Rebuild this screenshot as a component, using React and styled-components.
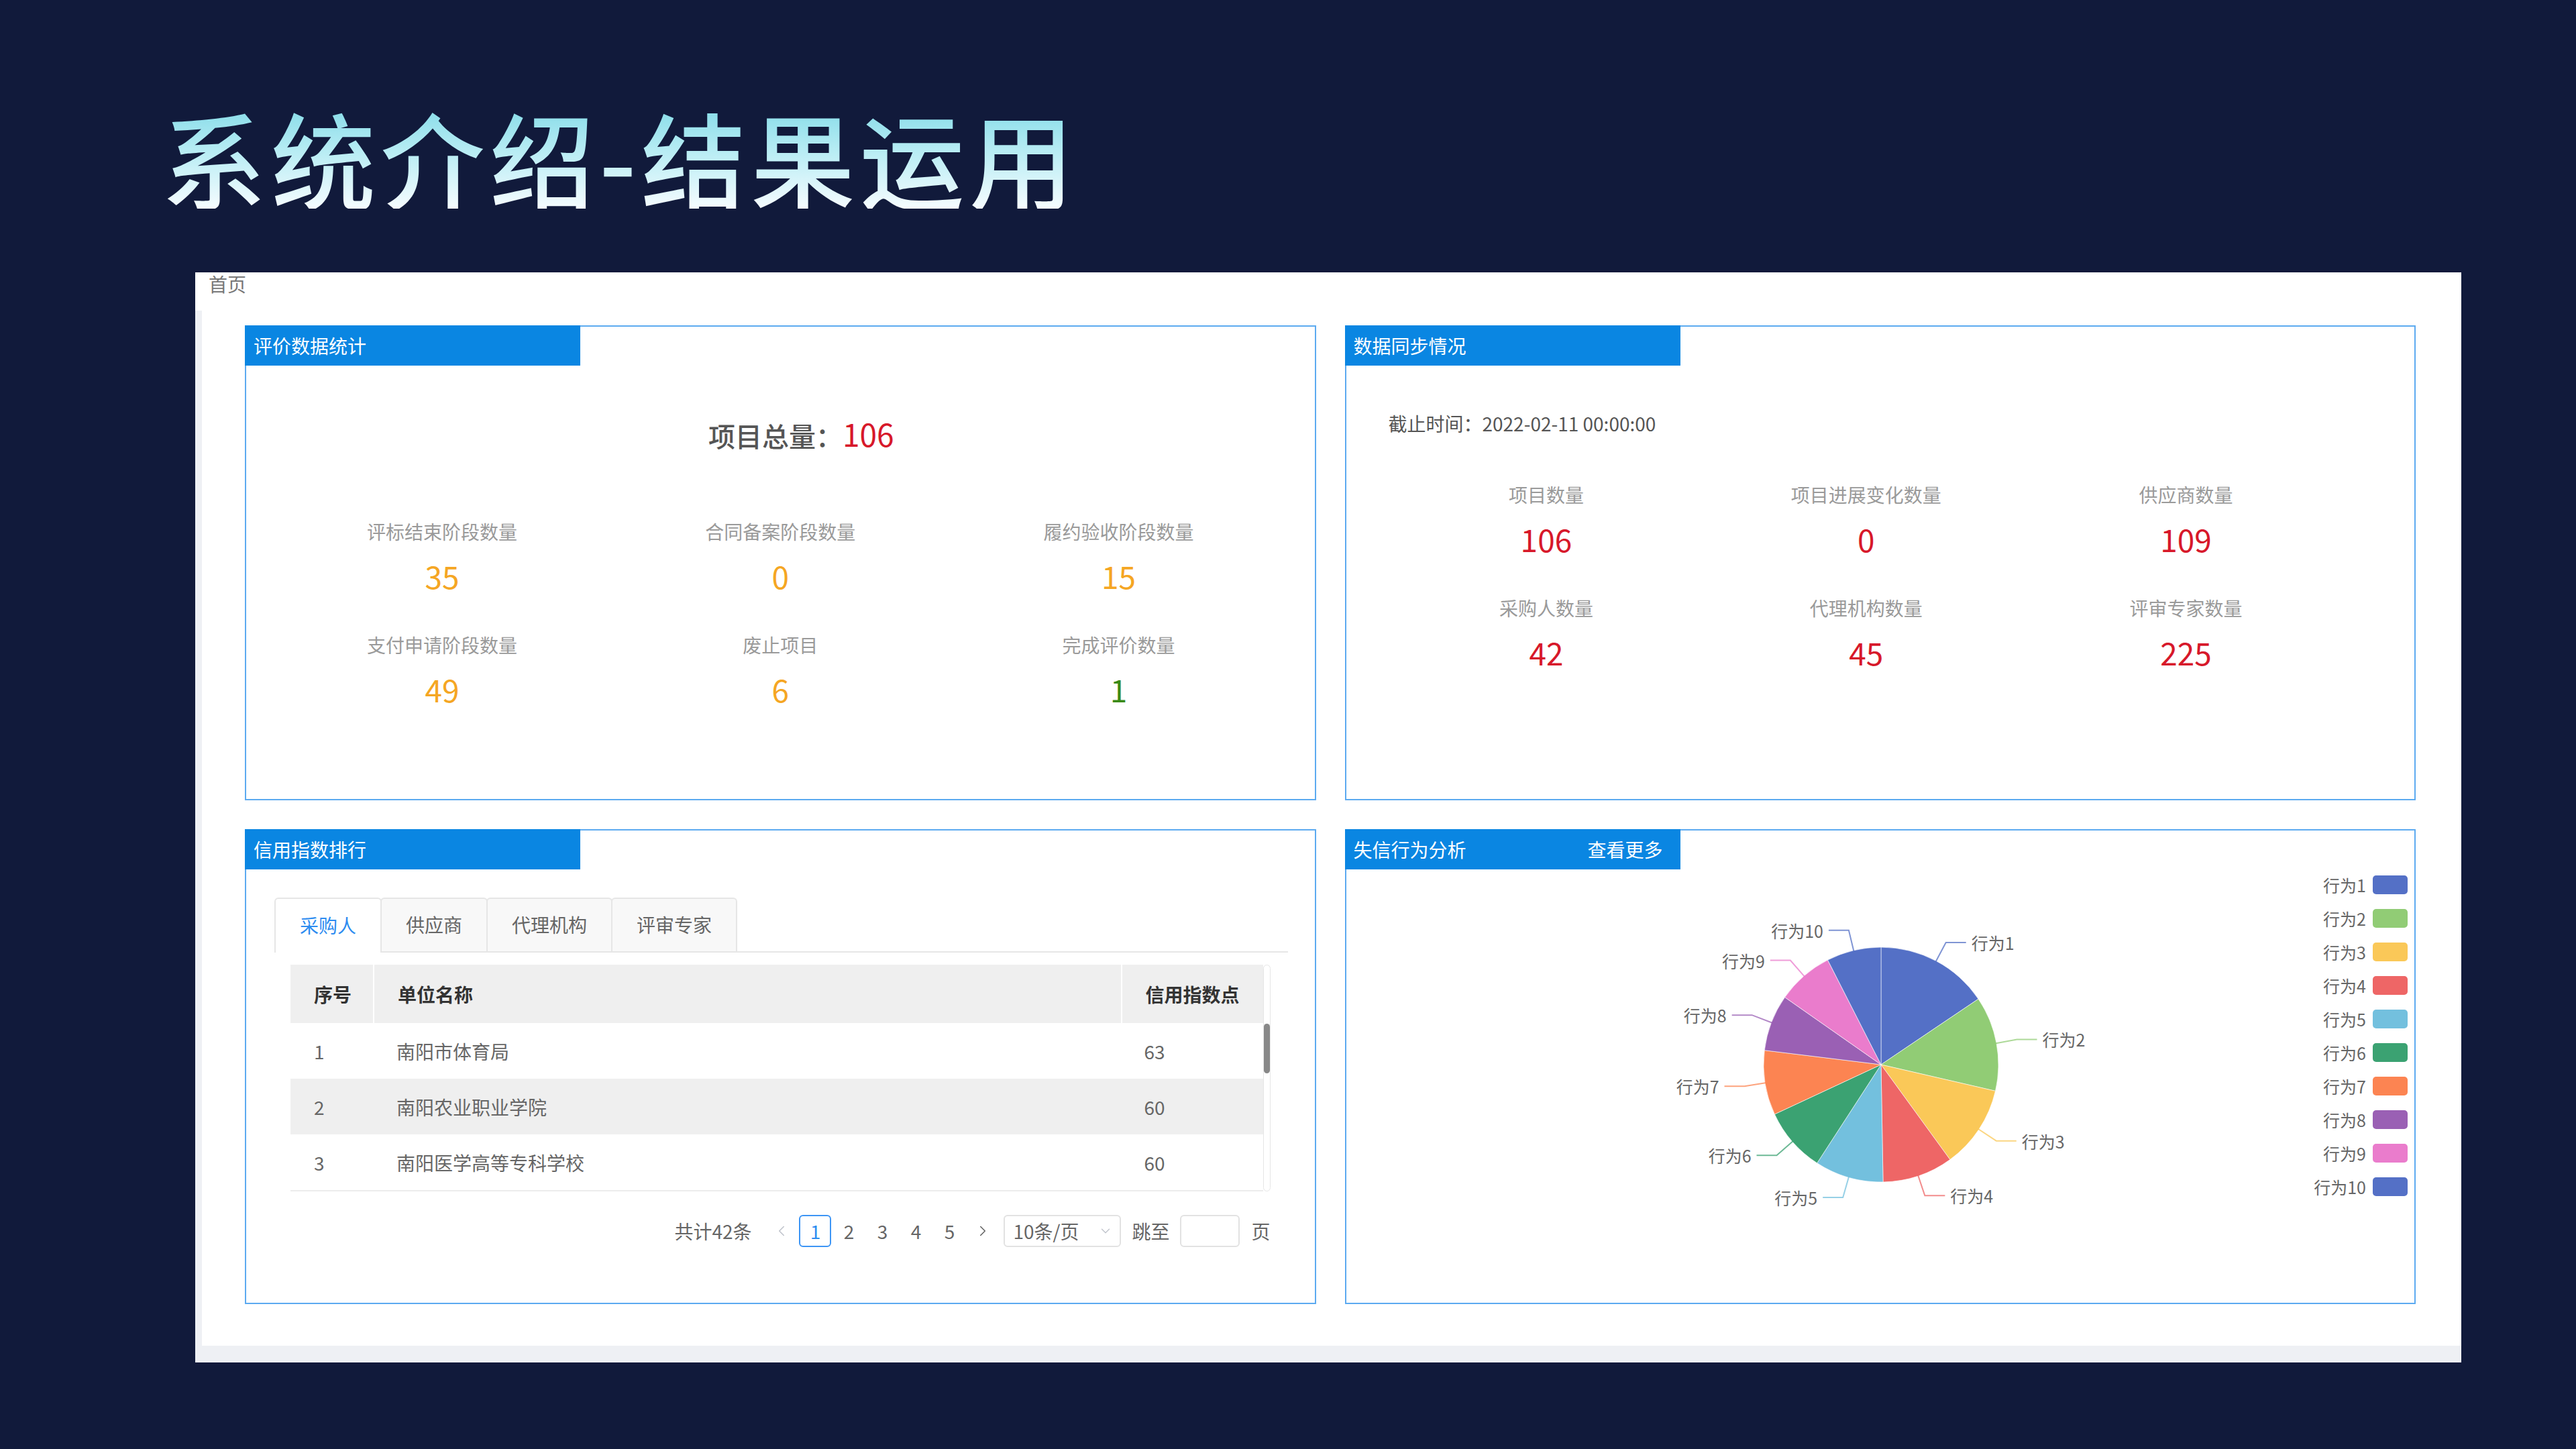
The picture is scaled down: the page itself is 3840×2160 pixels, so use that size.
import React from 'react';
import styled, { createGlobalStyle } from 'styled-components';
import { ChevronLeft, ChevronRight, ChevronDown } from 'lucide-react';

const GlobalStyle = createGlobalStyle`
  html, body {
    margin: 0;
    padding: 0;
    background: #111a3b;
  }
  body {
    font-family: "Noto Sans CJK SC", "Noto Sans", sans-serif;
  }
`;

const Page = styled.div`
  width: 3840px;
  height: 2160px;
  background: #111a3b;
  display: flex;
  flex-direction: column;
  overflow: hidden;
`;

const Title = styled.h1`
  margin: 155px 0 0 241px;
  width: fit-content;
  font-size: 156px;
  line-height: 156px;
  font-weight: 500;
  letter-spacing: 7px;
  background: linear-gradient(180deg, #84dbe8 0%, #bdeef5 50%, #f6fcff 100%);
  -webkit-background-clip: text;
  background-clip: text;
  color: transparent;
`;

const Frame = styled.div`
  margin: 95px 0 0 291px;
  width: 3378px;
  height: 1625px;
  background: #fff;
  display: flex;
  flex-direction: column;
`;

const Breadcrumb = styled.div`
  height: 57px;
  box-sizing: border-box;
  padding: 3px 0 0 20px;
  font-size: 28px;
  line-height: 28px;
  color: #777;
`;

const Main = styled.div`
  flex: 1;
  display: flex;
  background: #eef0f4;
  padding: 0 0 25px 10px;
  min-height: 0;
`;

const Content = styled.div`
  flex: 1;
  background: #fff;
  padding: 22px 68px 62px 64px;
  display: grid;
  grid-template-columns: 1fr 1fr;
  grid-template-rows: 708px 708px;
  gap: 43px;
`;

const Panel = styled.section`
  border: 2px solid #5caaf0;
  display: flex;
  flex-direction: column;
  min-width: 0;
  box-sizing: border-box;
`;

const PanelHeader = styled.div`
  margin: -2px 0 0 -2px;
  width: 500px;
  height: 60px;
  flex-shrink: 0;
  box-sizing: border-box;
  padding: 0 26px 0 13px;
  background: #0a86e2;
  color: #fff;
  font-size: 28px;
  display: flex;
  align-items: center;
  justify-content: space-between;
`;

const Total = styled.div`
  margin-top: 73px;
  padding-left: 62px;
  text-align: center;
  font-size: 40px;
  line-height: 56px;
  font-weight: 500;
  color: #555;

  span {
    font-size: 46px;
    font-weight: 400;
    color: #d7182a;
  }
`;

const SyncTime = styled.div`
  margin-top: 66px;
  padding-left: 63px;
  font-size: 28px;
  line-height: 40px;
  color: #555;
`;

const StatGrid = styled.div`
  display: grid;
  grid-template-columns: repeat(3, 1fr);
  row-gap: 55px;
  margin-top: ${(p) => p.$top}px;
  padding: 0 ${(p) => p.$right}px 0 ${(p) => p.$left}px;
`;

const StatItem = styled.div`
  display: flex;
  flex-direction: column;
  align-items: center;
  gap: 18px;
`;

const StatLabel = styled.div`
  font-size: 28px;
  line-height: 40px;
  color: #9a9a9a;
  white-space: nowrap;
`;

const StatValue = styled.div`
  font-size: 46px;
  line-height: 56px;
  color: ${(p) => p.$color};
`;

const TabBar = styled.div`
  margin: 42px 40px 0 42px;
  display: flex;
  align-items: flex-end;
  border-bottom: 2px solid #e6e6e6;
`;

const Tab = styled.div`
  height: ${(p) => (p.$active ? 82 : 80)}px;
  margin-bottom: ${(p) => (p.$active ? -2 : 0)}px;
  margin-left: -2px;
  box-sizing: border-box;
  padding: 0 36px 2px;
  border: 2px solid #e6e6e6;
  border-bottom: 0;
  border-radius: 6px 6px 0 0;
  background: ${(p) => (p.$active ? '#fff' : '#f8f8f8')};
  color: ${(p) => (p.$active ? '#2d8cf0' : '#666')};
  font-size: 28px;
  display: flex;
  align-items: center;

  &:first-child {
    margin-left: 0;
  }
`;

const TableWrap = styled.div`
  margin: 18px 66px 0;
  display: flex;
`;

const Table = styled.div`
  flex: 1;
  border-bottom: 2px solid #ececec;
`;

const Row = styled.div`
  display: grid;
  grid-template-columns: 123px 1fr 212px;
  height: ${(p) => (p.$head ? 87 : 83)}px;
  background: ${(p) => (p.$shade ? '#efefef' : '#fff')};
  font-size: 28px;
  color: ${(p) => (p.$head ? '#333' : '#666')};
  font-weight: ${(p) => (p.$head ? 700 : 400)};
`;

const Cell = styled.div`
  display: flex;
  align-items: center;
  padding-left: 35px;
  border-left: ${(p) => (p.$divide ? '2px solid #fff' : '0')};
  white-space: nowrap;
`;

const ScrollTrack = styled.div`
  width: 11px;
  box-sizing: border-box;
  border: 1px solid #e6e6e6;
  border-radius: 6px;
  padding-top: 87px;
  display: flex;
  justify-content: center;
`;

const ScrollThumb = styled.div`
  width: 10px;
  height: 74px;
  border-radius: 6px;
  background: #888;
`;

const Pager = styled.div`
  margin: 35px 66px 0;
  height: 48px;
  display: flex;
  align-items: center;
  justify-content: flex-end;
  font-size: 28px;
  color: #666;
`;

const PagerText = styled.span`
  margin: ${(p) => p.$margin};
  white-space: nowrap;
`;

const PageBtn = styled.div`
  width: 48px;
  height: 48px;
  margin: 0 1px;
  box-sizing: border-box;
  border: 2px solid ${(p) => (p.$active ? '#3d95f5' : 'transparent')};
  border-radius: 6px;
  color: ${(p) => (p.$active ? '#2d8cf0' : p.$muted ? '#c0c4cc' : '#666')};
  display: flex;
  align-items: center;
  justify-content: center;
`;

const SizeSelect = styled.div`
  margin-left: 6px;
  width: 175px;
  height: 48px;
  box-sizing: border-box;
  border: 2px solid #e2e2e2;
  border-radius: 6px;
  padding: 0 10px 0 12px;
  display: flex;
  align-items: center;
  justify-content: space-between;
  color: #666;
`;

const JumpInput = styled.div`
  width: 89px;
  height: 48px;
  box-sizing: border-box;
  border: 2px solid #e2e2e2;
  border-radius: 6px;
`;

const ChartBody = styled.div`
  flex: 1;
  position: relative;
`;

const Legend = styled.ul`
  position: absolute;
  top: 9px;
  right: 10px;
  margin: 0;
  padding: 0;
  list-style: none;
  display: flex;
  flex-direction: column;
  gap: 22px;
`;

const LegendItem = styled.li`
  height: 28px;
  display: flex;
  align-items: center;
  justify-content: flex-end;
  gap: 10px;
  font-size: 25px;
  color: #666;
`;

const Swatch = styled.span`
  width: 52px;
  height: 28px;
  border-radius: 5px;
  background: ${(p) => p.$color};
`;

const evalStats = [
  { label: '评标结束阶段数量', value: 35, color: '#f5a623' },
  { label: '合同备案阶段数量', value: 0, color: '#f5a623' },
  { label: '履约验收阶段数量', value: 15, color: '#f5a623' },
  { label: '支付申请阶段数量', value: 49, color: '#f5a623' },
  { label: '废止项目', value: 6, color: '#f5a623' },
  { label: '完成评价数量', value: 1, color: '#3a8a16' },
];

const syncStats = [
  { label: '项目数量', value: 106 },
  { label: '项目进展变化数量', value: 0 },
  { label: '供应商数量', value: 109 },
  { label: '采购人数量', value: 42 },
  { label: '代理机构数量', value: 45 },
  { label: '评审专家数量', value: 225 },
];

const tabs = ['采购人', '供应商', '代理机构', '评审专家'];

const ranking = [
  { no: 1, name: '南阳市体育局', score: 63 },
  { no: 2, name: '南阳农业职业学院', score: 60 },
  { no: 3, name: '南阳医学高等专科学校', score: 60 },
];

const slices = [
  { name: '行为1', color: '#5470c6', from: 0, to: 56 },
  { name: '行为2', color: '#91cc75', from: 56, to: 103 },
  { name: '行为3', color: '#fac858', from: 103, to: 144 },
  { name: '行为4', color: '#ee6666', from: 144, to: 179 },
  { name: '行为5', color: '#73c0de', from: 179, to: 213 },
  { name: '行为6', color: '#3ba272', from: 213, to: 245 },
  { name: '行为7', color: '#fc8452', from: 245, to: 277 },
  { name: '行为8', color: '#9a60b4', from: 277, to: 305 },
  { name: '行为9', color: '#ea7ccc', from: 305, to: 333 },
  { name: '行为10', color: '#5470c6', from: 333, to: 360 },
];

const CX = 797;
const CY = 291;
const R = 175;

// angle in degrees, clockwise from 12 o'clock
const pt = (deg, r) => {
  const a = (deg * Math.PI) / 180;
  return [CX + r * Math.sin(a), CY - r * Math.cos(a)];
};

const slicePath = (from, to) => {
  const [x0, y0] = pt(from, R);
  const [x1, y1] = pt(to, R);
  const large = to - from > 180 ? 1 : 0;
  return `M${CX},${CY} L${x0},${y0} A${R},${R} 0 ${large} 1 ${x1},${y1} Z`;
};

function PieChart() {
  return (
    <svg width="1593" height="646" viewBox="0 0 1593 646" style={{ display: 'block' }}>
      {slices.map((s) => (
        <path key={s.name} d={slicePath(s.from, s.to)} fill={s.color} stroke="#fff" strokeWidth="0.6" />
      ))}
      {slices.map((s) => {
        const mid = (s.from + s.to) / 2;
        const [ex, ey] = pt(mid, R - 2);
        const [bx, by] = pt(mid, R + 31);
        const side = Math.sin((mid * Math.PI) / 180) >= 0 ? 1 : -1;
        const hx = bx + side * 30;
        return (
          <g key={s.name}>
            <polyline
              points={`${ex},${ey} ${bx},${by} ${hx},${by}`}
              fill="none"
              stroke={s.color}
              strokeOpacity="0.75"
              strokeWidth="2"
            />
            <text
              x={hx + side * 8}
              y={by}
              textAnchor={side > 0 ? 'start' : 'end'}
              dominantBaseline="central"
              fontSize="25"
              fill="#666"
              fontFamily='"Noto Sans CJK SC", sans-serif'
            >
              {s.name}
            </text>
          </g>
        );
      })}
    </svg>
  );
}

function App() {
  return (
    <Page>
      <GlobalStyle />
      <Title>系统介绍-结果运用</Title>
      <Frame>
        <Breadcrumb>首页</Breadcrumb>
        <Main>
          <Content>
            <Panel>
              <PanelHeader>评价数据统计</PanelHeader>
              <Total>
                项目总量：<span>106</span>
              </Total>
              <StatGrid $top={95} $left={40} $right={40}>
                {evalStats.map((s) => (
                  <StatItem key={s.label}>
                    <StatLabel>{s.label}</StatLabel>
                    <StatValue $color={s.color}>{s.value}</StatValue>
                  </StatItem>
                ))}
              </StatGrid>
            </Panel>

            <Panel>
              <PanelHeader>数据同步情况</PanelHeader>
              <SyncTime>截止时间：2022-02-11 00:00:00</SyncTime>
              <StatGrid $top={66} $left={60} $right={102}>
                {syncStats.map((s) => (
                  <StatItem key={s.label}>
                    <StatLabel>{s.label}</StatLabel>
                    <StatValue $color="#d7182a">{s.value}</StatValue>
                  </StatItem>
                ))}
              </StatGrid>
            </Panel>

            <Panel>
              <PanelHeader>信用指数排行</PanelHeader>
              <TabBar>
                {tabs.map((t, i) => (
                  <Tab key={t} $active={i === 0}>
                    {t}
                  </Tab>
                ))}
              </TabBar>
              <TableWrap>
                <Table>
                  <Row $head $shade>
                    <Cell>序号</Cell>
                    <Cell $divide>单位名称</Cell>
                    <Cell $divide>信用指数点</Cell>
                  </Row>
                  {ranking.map((r) => (
                    <Row key={r.no} $shade={r.no === 2}>
                      <Cell>{r.no}</Cell>
                      <Cell>{r.name}</Cell>
                      <Cell>{r.score}</Cell>
                    </Row>
                  ))}
                </Table>
                <ScrollTrack>
                  <ScrollThumb />
                </ScrollTrack>
              </TableWrap>
              <Pager>
                <PagerText $margin="0 20px 0 0">共计42条</PagerText>
                <PageBtn $muted>
                  <ChevronLeft size={26} strokeWidth={1.5} />
                </PageBtn>
                <PageBtn $active>1</PageBtn>
                <PageBtn>2</PageBtn>
                <PageBtn>3</PageBtn>
                <PageBtn>4</PageBtn>
                <PageBtn>5</PageBtn>
                <PageBtn>
                  <ChevronRight size={26} strokeWidth={1.5} />
                </PageBtn>
                <SizeSelect>
                  10条/页
                  <ChevronDown size={22} strokeWidth={1.5} color="#c0c4cc" />
                </SizeSelect>
                <PagerText $margin="0 16px">跳至</PagerText>
                <JumpInput />
                <PagerText $margin="0 0 0 17px">页</PagerText>
              </Pager>
            </Panel>

            <Panel>
              <PanelHeader>
                <span>失信行为分析</span>
                <span>查看更多</span>
              </PanelHeader>
              <ChartBody>
                <PieChart />
                <Legend>
                  {slices.map((s) => (
                    <LegendItem key={s.name}>
                      {s.name}
                      <Swatch $color={s.color} />
                    </LegendItem>
                  ))}
                </Legend>
              </ChartBody>
            </Panel>
          </Content>
        </Main>
      </Frame>
    </Page>
  );
}

export default App;
